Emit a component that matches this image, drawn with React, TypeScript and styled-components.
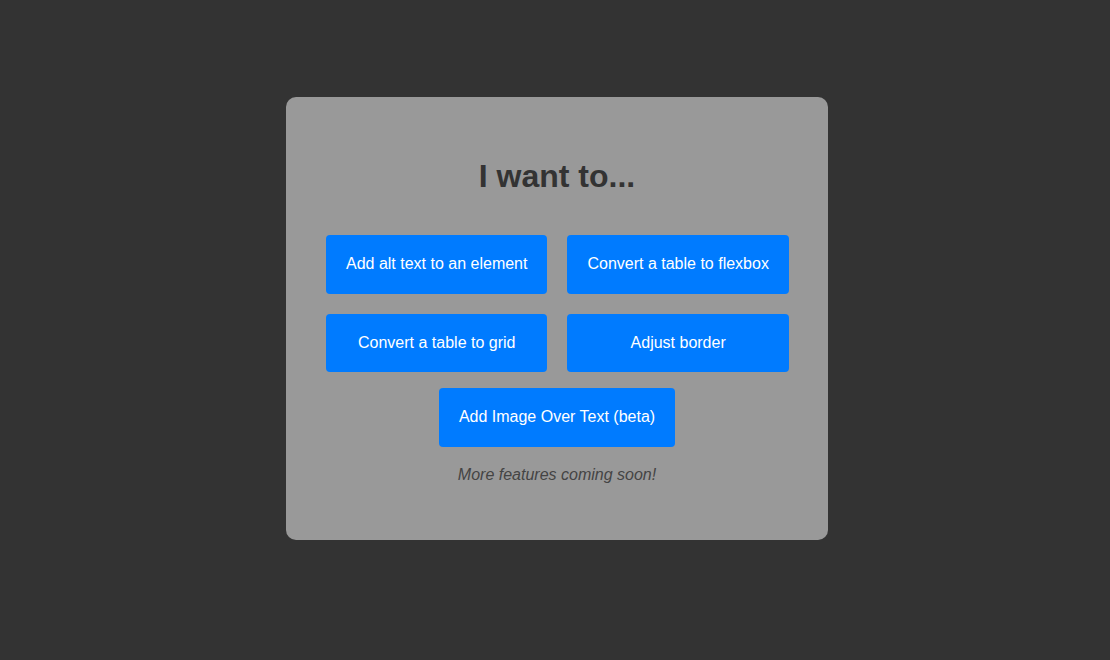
import styled, { createGlobalStyle } from 'styled-components'

const GlobalStyle = createGlobalStyle`
    html, body {
        margin: 0;
        padding: 0;
        background: #333333;
        font-family: 'Liberation Sans', Arial, sans-serif;
    }
`

const actions = [
    'Add alt text to an element',
    'Convert a table to flexbox',
    'Convert a table to grid',
    'Adjust border',
]

const App = () => {
    return (
        <>
            <GlobalStyle />
            <Page>
                <Card>
                    <Title>I want to...</Title>
                    <ActionGrid>
                        {actions.map((label) => (
                            <ActionButton key={label}>{label}</ActionButton>
                        ))}
                    </ActionGrid>
                    <ActionButton $single>Add Image Over Text (beta)</ActionButton>
                    <Note>More features coming soon!</Note>
                </Card>
            </Page>
        </>
    )
}

export default App

const Page = styled.div`
    width: 100%;
    min-height: 660px;
    display: flex;
    justify-content: center;
    padding: 97px 0 0 4px;
    box-sizing: border-box;
`

const Card = styled.div`
    width: 542px;
    height: 443px;
    box-sizing: border-box;
    padding: 40px;
    background: #999999;
    border-radius: 10px;
    display: flex;
    flex-direction: column;
    align-items: center;
`

const Title = styled.h1`
    margin: 21px 0 40px;
    font-size: 32px;
    line-height: 37px;
    font-weight: 700;
    color: #333333;
`

const ActionGrid = styled.div`
    width: 100%;
    display: grid;
    grid-template-columns: 1fr 1fr;
    gap: 20px;
    margin-bottom: 16px;
`

const ActionButton = styled.button<{ $single?: boolean }>`
    height: 58.5px;
    padding: 0 20px;
    border: none;
    border-radius: 4px;
    background: #007bff;
    color: #ffffff;
    font-family: 'Liberation Sans', Arial, sans-serif;
    font-size: 16px;
    white-space: nowrap;
    cursor: pointer;
    width: ${(p) => (p.$single ? 'auto' : '100%')};
`

const Note = styled.p`
    margin: 19px 0 0;
    font-size: 16px;
    line-height: 18px;
    font-style: italic;
    color: #444444;
`
